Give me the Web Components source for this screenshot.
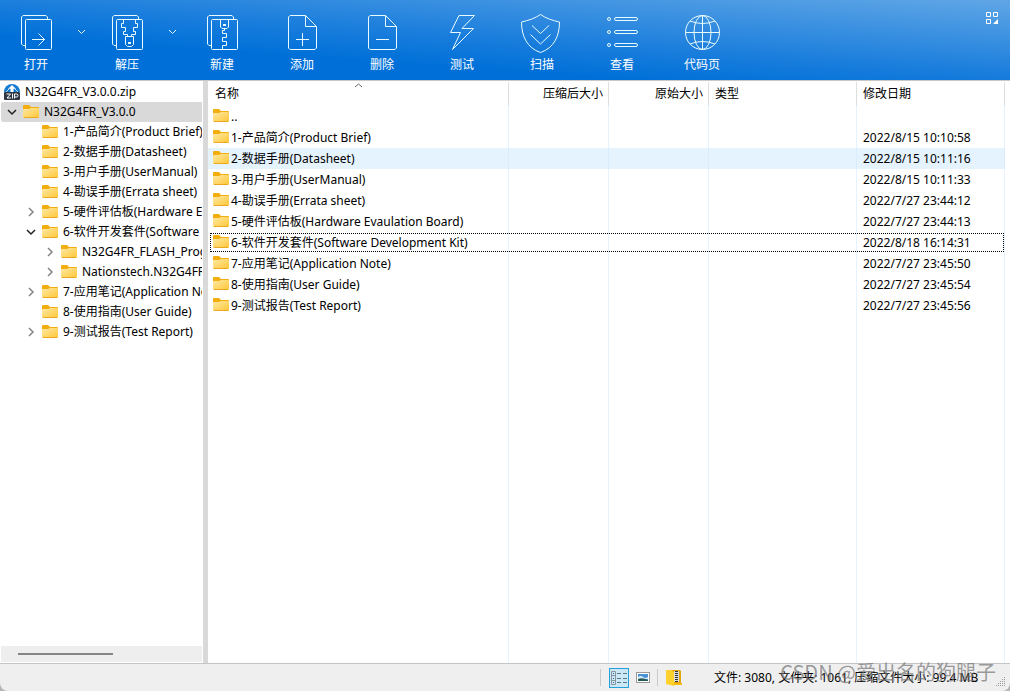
<!DOCTYPE html>
<html lang="zh-CN">
<head>
<meta charset="utf-8">
<title>N32G4FR_V3.0.0.zip</title>
<style>
  html, body { margin: 0; height: 100%; }
  body { background: #b4b4b4; color: #000; font: 12px/20px "Noto Sans", "Noto Sans CJK SC", sans-serif; }
</style>
</head>
<body>
<zip-app></zip-app>

<script>
const define = (name, html, init) => {
  const template = document.createElement('template');
  template.innerHTML = html;
  customElements.define(name, class extends HTMLElement {
    constructor() {
      super();
      this.attachShadow({ mode: 'open' }).append(template.content.cloneNode(true));
    }
    connectedCallback() { if (init) init(this, this.shadowRoot); }
  });
};

const backPage = '<path d="M9 33.5H7L5.5 32V5L7 3.5H30L31.5 5V7"/><rect x="9.5" y="7.5" width="26" height="30" rx="1"/>';
const singlePage = '<path d="M23.5 3.5H8L6.5 5V36L8 37.5H33L34.5 36V14.5L23.5 3.5V14.5H34.5"/>';
const toolIcons = {
  open: backPage + '<path d="M16 27.5H29M22.5 21.5L28.5 27.5L22.5 33.5"/>',
  extract: backPage + '<path d="M16.5 7.5V11.5H14.5V15.5H18.5V19.5H16.5V22.5H20.5V24.5M28.5 7.5V11.5H30.5V15.5H26.5V19.5H28.5V22.5H24.5V24.5M18.5 24.5H26.5V32.5L24.5 34.5H20.5L18.5 32.5ZM21 30.5H24M21 31.5H24"/>',
  create: backPage + '<path d="M18.5 7.5V15L20 16.5H25L26.5 15V7.5M21 12.5H24M21 13.5H24M22.5 17V18.5H20.5V21.5H24.5V25.5H20.5V29.5H24.5V33.5H20.5V37.5"/>',
  add: singlePage + '<path d="M14 27.5H27M20.5 21V34"/>',
  remove: singlePage + '<path d="M14 27.5H27"/>',
  test: '<path d="M17 3.5H32.5L20 16.5H31.5L10.5 37.5L18.5 20.5H8.5Z"/>',
  scan: '<path d="M18.5 2.5C13 6.5 6 8.5 -.5 10C-.5 24 5 36 18.5 40.5C32 36 37.5 24 37.5 10C31 8.5 24 6.5 18.5 2.5ZM10 13.5L18.5 21.5L27 13.5M8.5 22.5L18.5 32L28.5 22.5"/>',
  view: [7, 20, 33].map(y => `<circle cx="7" cy="${y}" r="1.5"/><rect x="12.5" y="${y - 1.5}" width="23" height="3" rx="1.5"/>`).join(''),
  codepage: '<circle cx="20.5" cy="20.5" r="17"/><ellipse cx="20.5" cy="20.5" rx="8.5" ry="17"/><path d="M3.5 20.5H37.5M20.5 3.5V37.5M8 9Q20.5 14 33 9M8 32Q20.5 27 33 32"/>'
};

define('tool-button', `
  <style>
    :host { display: block; flex: none; width: 80px; }
    :host([split]) { width: 91px; }
    .wrap { display: flex; height: 100%; }
    button { appearance: none; border: 0; margin: 0; padding: 0; background: none; color: #fff; font: inherit; }
    .main { flex: 1; display: flex; flex-direction: column; align-items: center; gap: 3px; padding-top: 12px; }
    .more { width: 19px; display: none; padding: 30px 0 0 6px; }
    :host([split]) .more { display: flex; align-items: flex-start; }
    svg { display: block; fill: none; stroke: #e8fbff; overflow: visible; }
  </style>
  <div class="wrap">
    <button class="main" type="button"><svg width="40" height="40" aria-hidden="true"></svg><span><slot></slot></span></button>
    <button class="more" type="button" aria-label="更多"><svg width="7" height="5" aria-hidden="true"><path d="M0 0L3.5 3.5L7 0"/></svg></button>
  </div>`, (host, root) => { root.querySelector('.main svg').innerHTML = toolIcons[host.getAttribute('icon')]; });

define('tool-bar', `
  <style>
    :host { display: flex; height: 80px; border-bottom: 1px solid #c8c8c8;
      background: linear-gradient(184deg, #60a6e6 0%, #197ddc 50%, #0070d8 70%); }
    .menu { appearance: none; border: 0; background: none; padding: 12px; margin: 0 0 auto auto; }
    svg { display: block; }
  </style>
  <tool-button icon="open" split>打开</tool-button>
  <tool-button icon="extract" split>解压</tool-button>
  <tool-button icon="create">新建</tool-button>
  <tool-button icon="add">添加</tool-button>
  <tool-button icon="remove">删除</tool-button>
  <tool-button icon="test">测试</tool-button>
  <tool-button icon="scan">扫描</tool-button>
  <tool-button icon="view">查看</tool-button>
  <tool-button icon="codepage">代码页</tool-button>
  <button class="menu" type="button" aria-label="菜单"><svg width="12" height="12" fill="none" stroke="#fff"><path d="M.5.5h4v4h-4zM7.5.5h4v4h-4zM.5 7.5h4v4h-4z"/><path d="M12 7V12H7Z" fill="#fff" stroke="none"/></svg></button>`);

define('folder-icon', `
  <style>:host { display: block; flex: none; width: 16px; height: 14px; } svg { display: block; }</style>
  <svg width="16" height="14" aria-hidden="true">
    <defs><linearGradient id="g" x1="0" y1="0" x2="1" y2="1"><stop offset="0" stop-color="#ffe9a6"/><stop offset="1" stop-color="#ffc634"/></linearGradient></defs>
    <path d="M0 1Q0 0 1 0H6L8 2H15Q16 2 16 3V8H0Z" fill="#f2ad0e"/>
    <path d="M0 5Q0 4 1 4H6L8 3H15Q16 3 16 4V12Q16 13 15 13H1Q0 13 0 12Z" fill="url(#g)"/>
    <path d="M1 12.5H15" stroke="#eba820"/>
  </svg>`);

define('tree-item', `
  <style>
    :host { display: block; }
    .row { display: flex; align-items: center; height: 20px; padding-left: 4px; white-space: nowrap; }
    .row.selected { background: #d9d9d9; margin-left: 1px; padding-left: 3px; border-radius: 2px 0 0 2px; }
    .toggle { appearance: none; border: 0; background: none; flex: none; width: 16px; height: 20px; margin: 0 3px 0 0; padding: 0; visibility: hidden; }
    :host([state]) .toggle { visibility: visible; }
    svg { display: block; fill: none; margin: auto; }
    .closed { stroke: #858585; stroke-width: 1.5; }
    .opened { stroke: #222; stroke-width: 1.5; display: none; }
    :host([state=open]) .opened { display: block; }
    :host([state=open]) .closed { display: none; }
    .label { margin-left: 5px; }
    .archive { display: none; }
    .group { padding-left: 19px; }
    :host([archive]) .toggle, :host([archive]) folder-icon { display: none; }
    :host([archive]) .archive { display: block; flex: none; margin: 0; }
    :host([archive]) .group { padding-left: 0; }
  </style>
  <div class="row">
    <button class="toggle" type="button" aria-label="展开或折叠">
      <svg class="closed" width="8" height="10"><path d="M2 1L6 5L2 9"/></svg>
      <svg class="opened" width="10" height="8"><path d="M1 2L5 6L9 2"/></svg>
    </button>
    <svg class="archive" width="16" height="16" aria-hidden="true">
      <path d="M0 8A8 8 0 0 1 16 8Z" fill="#147bd1"/>
      <path d="M8 1L12 5H9.5V8H6.5V5H4Z" fill="#fff"/>
      <path d="M2 8L6 4M14 8L10 4" stroke="#bfe0f8"/>
      <rect y="8" width="16" height="8" rx="1" fill="#2d3844"/>
      <path d="M2.500 10H6.500L3 14H7M8.500 9.500V14.500M10.500 14.500V10H12.500Q14 10 14 11.500Q14 13 12.500 13H11" stroke="#fff"/>
    </svg>
    <folder-icon></folder-icon>
    <span class="label"></span>
  </div>
  <div class="group"><slot></slot></div>`,
  (host, root) => {
    root.querySelector('.label').textContent = host.getAttribute('label');
    root.querySelector('.row').classList.toggle('selected', host.hasAttribute('selected'));
  });

define('file-tree', `
  <style>
    :host { display: flex; flex-direction: column; flex: none; box-sizing: border-box; width: 208px; padding: 1px 1px 1px 0; border-right: 5px solid #d9d9d9; background: #fff; }
    nav { flex: 1; min-height: 0; overflow: hidden; }
    .scroll { height: 16px; margin-left: 1px; padding: 0 17px; background: #eee; display: flex; align-items: center; }
    .thumb { width: 95px; height: 2px; background: #858585; }
  </style>
  <nav aria-label="文件夹">
    <tree-item archive label="N32G4FR_V3.0.0.zip">
      <tree-item state="open" selected label="N32G4FR_V3.0.0">
        <tree-item label="1-产品简介(Product Brief)"></tree-item>
        <tree-item label="2-数据手册(Datasheet)"></tree-item>
        <tree-item label="3-用户手册(UserManual)"></tree-item>
        <tree-item label="4-勘误手册(Errata sheet)"></tree-item>
        <tree-item state="closed" label="5-硬件评估板(Hardware Evaulation Board)"></tree-item>
        <tree-item state="open" label="6-软件开发套件(Software Development Kit)">
          <tree-item state="closed" label="N32G4FR_FLASH_Programming"></tree-item>
          <tree-item state="closed" label="Nationstech.N32G4FR_Library"></tree-item>
        </tree-item>
        <tree-item state="closed" label="7-应用笔记(Application Note)"></tree-item>
        <tree-item label="8-使用指南(User Guide)"></tree-item>
        <tree-item state="closed" label="9-测试报告(Test Report)"></tree-item>
      </tree-item>
    </tree-item>
  </nav>
  <div class="scroll"><div class="thumb"></div></div>`);

const files = [
  ['..', ''],
  ['1-产品简介(Product Brief)', '2022/8/15 10:10:58'],
  ['2-数据手册(Datasheet)', '2022/8/15 10:11:16', 'hot'],
  ['3-用户手册(UserManual)', '2022/8/15 10:11:33'],
  ['4-勘误手册(Errata sheet)', '2022/7/27 23:44:12'],
  ['5-硬件评估板(Hardware Evaulation Board)', '2022/7/27 23:44:13'],
  ['6-软件开发套件(Software Development Kit)', '2022/8/18 16:14:31', 'focused'],
  ['7-应用笔记(Application Note)', '2022/7/27 23:45:50'],
  ['8-使用指南(User Guide)', '2022/7/27 23:45:54'],
  ['9-测试报告(Test Report)', '2022/7/27 23:45:56']
];

define('file-list', `
  <style>
    :host { display: block; flex: 1; min-width: 0; background: #fff; padding: 1px 5px 0 0; }
    table { width: 100%; height: 100%; border-collapse: separate; border-spacing: 0; table-layout: fixed; }
    col.size { width: 100px; }
    col.wide { width: 148px; }
    th, td { box-sizing: border-box; padding: 0 5px 0 6px; font-weight: 400; text-align: left; white-space: nowrap; border-right: 1px solid #e6f2fd; }
    th { position: relative; height: 24px; padding-left: 6px; border-right-color: #dedede; }
    th:first-child { padding-left: 7px; }
    th.num { text-align: right; }
    tr.item { height: 21px; position: relative; }
    td { height: 21px; }
    td:first-child { padding-left: 5px; }
    tr.hot td { background: #e5f3ff; border-right-color: #d9edfd; }
    tr.focused td:first-child::after { content: ""; position: absolute; inset: 1px 1px 1px 2px; border: 1px dotted #000; }
    tr.fill td { height: auto; }
    .name { display: flex; align-items: center; gap: 2px; height: 21px; }
    .name folder-icon { padding-bottom: 2px; }
    .sort { position: absolute; top: 1px; left: 50%; margin-left: -4px; fill: none; stroke: #666; }
  </style>
  <table>
    <colgroup><col><col class="size"><col class="size"><col class="wide"><col class="wide"></colgroup>
    <thead><tr><th>名称<svg class="sort" width="9" height="5" aria-hidden="true"><path d="M1 4L4.5 1L8 4"/></svg></th><th class="num">压缩后大小</th><th class="num">原始大小</th><th>类型</th><th>修改日期</th></tr></thead>
    <tbody></tbody>
  </table>`, (host, root) => {
    root.querySelector('tbody').innerHTML = files.map(([name, date, state = '']) =>
      `<tr class="item ${state}"><td><div class="name"><folder-icon></folder-icon><span>${name}</span></div></td><td></td><td></td><td></td><td>${date}</td></tr>`
    ).join('') + '<tr class="fill"><td></td><td></td><td></td><td></td><td></td></tr>';
  });

define('status-bar', `
  <style>
    :host { display: flex; align-items: center; justify-content: flex-end; height: 27px; border-top: 1px solid #c4c4c4; background: #efefef; }
    button { appearance: none; box-sizing: border-box; width: 20px; height: 20px; margin: 0; padding: 0; border: 1px solid transparent; background: none; display: grid; place-items: center; }
    button.on { border-color: #26a0da; background: #cbe8f6; }
    .sep { width: 1px; height: 17px; background: #cacaca; }
    .views { display: flex; gap: 4px; margin: 0 4px 0 8px; }
    .folder { margin: 0 31px 0 8px; }
    .info { width: 282px; white-space: nowrap; }
    .grip { align-self: flex-end; margin: 0 4px 4px 0; }
    svg { display: block; flex: none; }
  </style>
  <div class="sep"></div>
  <div class="views">
    <button class="on" type="button" aria-label="详细信息"><svg width="16" height="14" fill="none"><path d="M.5.5H4.5V13.5H.5ZM.5 4.5H4.5M.5 9.5H4.5" stroke="#8a949c"/><path d="M2 2.5H3M2 7.5H3M2 11.5H3" stroke="#386890"/><path d="M6 2.5H10M12 2.5H16M6 7.5H10M12 7.5H16M6 11.5H10M12 11.5H16" stroke="#5f7580"/></svg></button>
    <button type="button" aria-label="缩略图"><svg width="14" height="12"><rect x=".5" y=".5" width="13" height="10" fill="#fff" stroke="#9a9a9a"/><path d="M2 2H12V9H2Z" fill="#4a92d8"/><path d="M2 5Q5 3 7 5T12 5V7H2Z" fill="#d8effa"/><path d="M2 7Q6 5 12 8V9H2Z" fill="#255a55"/></svg></button>
  </div>
  <div class="sep"></div>
  <svg class="folder" width="17" height="17" aria-hidden="true"><path d="M6 1H14L15 2V14H6Z" fill="#e3a60a"/><path d="M8 2H13V13H8Z" fill="#ddd"/><path d="M10.500 2V13" stroke="#333" stroke-width="3" stroke-dasharray="1 1"/><path d="M0 1H6L8 4V17L0 15Z" fill="#ffd12e"/><path d="M8 14H16V16H8Z" fill="#f5b90f"/></svg>
  <div class="info">文件: 3080, 文件夹: 1061, 压缩文件大小: 99.4 MB</div>
  <svg class="grip" width="10" height="10" aria-hidden="true" fill="#999"><path d="M8 0h1v1h-1zM6 2h1v1h-1zM8 2h1v1h-1zM4 4h1v1h-1zM6 4h1v1h-1zM8 4h1v1h-1zM2 6h1v1h-1zM4 6h1v1h-1zM6 6h1v1h-1zM8 6h1v1h-1zM0 8h1v1h-1zM2 8h1v1h-1zM4 8h1v1h-1zM6 8h1v1h-1zM8 8h1v1h-1z"/></svg>`);

define('zip-app', `
  <style>
    :host { display: flex; flex-direction: column; height: 100vh; position: relative; overflow: hidden; border-radius: 0 0 8px 8px; }
    main { flex: 1; min-height: 0; display: flex; }
    .watermark { position: absolute; right: 14px; bottom: 6px; font-family: "Noto Sans CJK SC", sans-serif; font-size: 20px; line-height: 26px; color: rgba(115, 115, 115, .7); pointer-events: none; white-space: nowrap; }
  </style>
  <tool-bar></tool-bar>
  <main><file-tree></file-tree><file-list></file-list></main>
  <status-bar></status-bar>
  <div class="watermark">CSDN @爱出名的狗腿子</div>`);
</script>
</body>
</html>
